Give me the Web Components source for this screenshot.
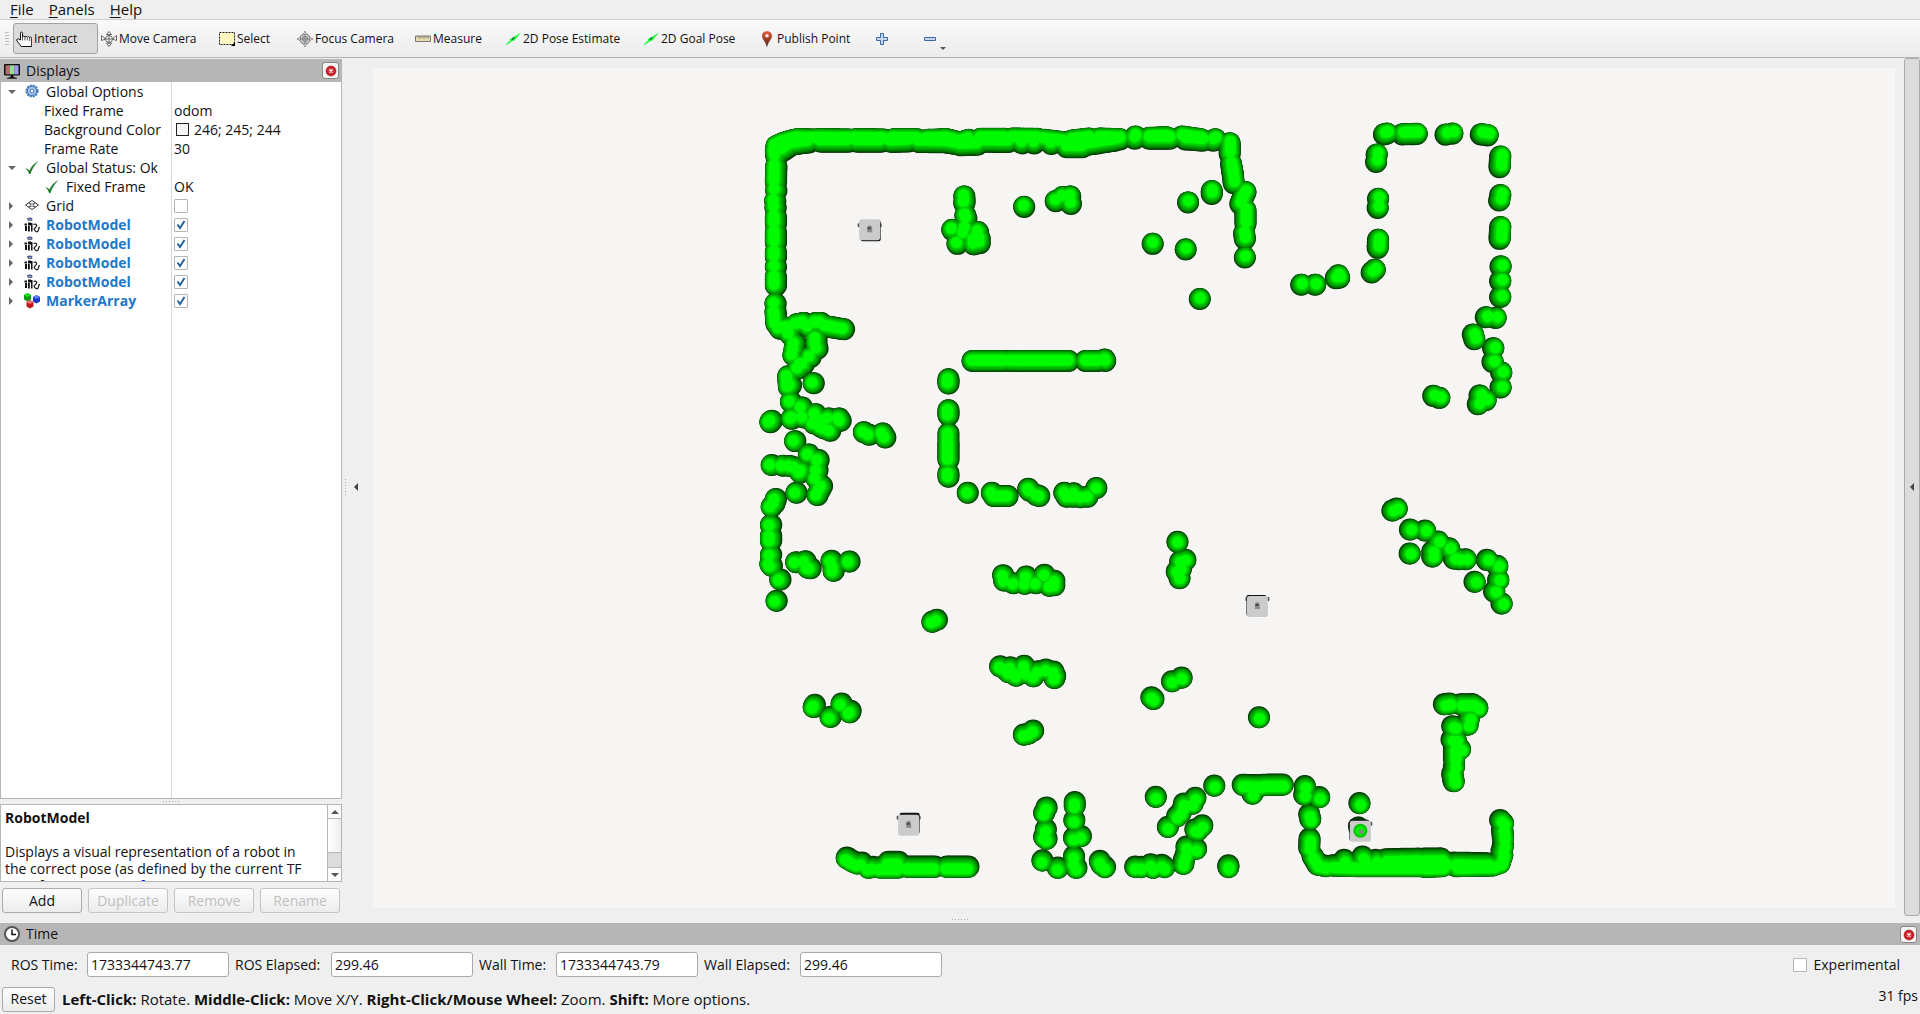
<!DOCTYPE html>
<html lang="en">
<head>
<meta charset="utf-8">
<title>RViz</title>
<style>
html, body { margin: 0; height: 100%; }
body { font: 14px/19px "Open Sans", "Noto Sans", sans-serif; color: #111; background: #efefef; overflow: hidden; }
</style>
</head>
<body>
<rviz-app></rviz-app>
<script>
const define = (name, html, setup) => {
  const tpl = document.createElement('template');
  tpl.innerHTML = html;
  customElements.define(name, class extends HTMLElement {
    connectedCallback() {
      if (this.shadowRoot) return;
      const root = this.attachShadow({ mode: 'open' });
      root.append(tpl.content.cloneNode(true));
      if (setup) setup(this, root);
    }
  });
};

const makeIcon = name => {
  const icon = document.createElement('rv-icon');
  icon.setAttribute('name', name);
  return icon;
};

const ICONS = {
  hand: '<path d="M4.500 9V2.200q0-1.200 1-1.200t1 1.200V6q.2-.9 1.200-.9t1.200 1q.3-.8 1.200-.8t1.200 1q.3-.6 1.200-.6t1.200 1q.3-.5 1-.5t1 1V15.500H5.200Q4 13.500 1 10q-.8-1.200.2-1.900t1.800.3z" fill="#fff" stroke="#111"/><path d="M6.500 6v3.500M8.900 6v3.500M11.300 6.500v3M13.700 7v3" stroke="#333" fill="none" stroke-width=".8"/>',
  move: '<g fill="#fff" stroke="#666"><circle cx="8" cy="8" r="3.500"/><path d="M8 .5L10.500 3.500H5.500zM8 15.500L10.500 12H5.500zM.5 4.500L4.500 8L.5 9.500zM15.500 4.500L11.500 8L15.500 9.500z"/><path d="M8 3v10M3 8h10" /></g>',
  select: '<path d="M.5 1.500h15v12H.5z" fill="#fff7c0" stroke="#222" stroke-dasharray="2 1"/><path d="M16 11v4h-4z" fill="#000"/>',
  focus: '<g fill="none" stroke="#888" stroke-width="1.300"><circle cx="8" cy="8" r="5"/><circle cx="8" cy="8" r="2.500"/><path d="M8 0v16M0 8h16"/></g><path d="M8 .5l1.500 2.500h-3zM8 15.500L6.500 13h3zM.5 8L3 6.500v3zM15.500 8L13 9.500v-3z" fill="#fff" stroke="#888" stroke-width=".7"/>',
  ruler: '<path d="M.5 5h15v5.500H.5z" fill="#e9dcae" stroke="#777"/><path d="M3 5v2M5 5v3M7 5v2M9 5v3M11 5v2M13 5v3" stroke="#777" stroke-width=".8"/>',
  arrow: '<path d="M.5 13.800L5 9.500L4.500 8.500L16 1.500L9.500 9.500L8 9.700L1.500 14z" fill="#1ef53a"/><path d="M7 8.500l2-2" stroke="#063" stroke-width="1.500"/>',
  pin: '<defs><linearGradient id="g" x2="0" y2="1"><stop offset="0" stop-color="#e8583c"/><stop offset="1" stop-color="#4c2b12"/></linearGradient></defs><path d="M8 .2c3 0 5 2 5 4.800C13 8.500 8.800 11 8.200 16H7.800C7.200 11 3 8.500 3 5C3 2.200 5 .2 8 .2z" fill="url(#g)"/><circle cx="8" cy="4.800" r="1.800" fill="#fbe9e4"/>',
  plus: '<path d="M6.500 2.500h3v4h4v3h-4v4h-3v-4h-4v-3h4z" fill="#c5d5ec" stroke="#3a66ab"/>',
  minus: '<path d="M2.500 6.500h11v3h-11z" fill="#c5d5ec" stroke="#3a66ab"/>',
  screen: '<path d="M.5 1.500h15v10.500H.5z" fill="#111" stroke="#111"/><path d="M1.500 2.300h4.500v9H1.500z" fill="#b96c6c"/><path d="M6 2.300h4.200v9H6z" fill="#91e093"/><path d="M10.200 2.300h4.300v9h-4.300z" fill="#9c9ef0"/><path d="M6.500 12h3v2h-3zM3 15q5-1.800 10 0v.8H3z" fill="#111"/>',
  clock: '<circle cx="8" cy="8" r="7" fill="#fff" stroke="#555" stroke-width="2"/><path d="M8 3.500V8.500H12" fill="none" stroke="#111" stroke-width="1.500"/>',
  gear: '<circle cx="8" cy="7" r="5.500" fill="#bcd0ef" stroke="#4878be" stroke-width="2.200" stroke-dasharray="2 .88"/><circle cx="8" cy="7" r="4.600" fill="#a9c4ea" stroke="#4878be"/><circle cx="8" cy="7" r="1.900" fill="#fff" stroke="#4878be"/>',
  check: '<path d="M1.500 8.500Q3.500 8 5.300 10.500Q8.500 4 14.500 1Q8.500 7 6.500 14H5Q4 10 1.500 8.500z" fill="#1f7a28"/>',
  grid: '<path d="M8 2.500L14.500 7L8 11.500L1.500 7zM4.700 4.700l6.600 4.600M11.300 4.700l-6.600 4.600" fill="none" stroke="#333"/><ellipse cx="8" cy="7" rx="2" ry="1.300" fill="#fff" stroke="#333" stroke-width=".7"/>',
  robot: '<path d="M3.500 1.500q2.500-1.500 4.500 0v2h-4z" fill="#eee" stroke="#222" stroke-width=".6"/><path d="M3.500 1.300h4.500v1.200H3.500z" fill="#2438a8"/><path d="M.5 6.500h2.500v2H.5zM1 9h2v5H1zM4 5.500h3v3H4zM4 9h1.800v5.500H4zM7 6h1.500v8.500H7z" fill="#111"/><path d="M9.500 7.500q2.500-1 3 .5t-1.500 3t1 3.500M12 14.500q2 1 2.500-2l1-2.500" fill="none" stroke="#222" stroke-width="1.300"/>',
  marker: '<path d="M0 2L3.500 0L7 2v4.500L3.500 8.500L0 6.500z" fill="#0a9a12"/><path d="M0 2L3.500 0L7 2L3.500 4z" fill="#19e322"/><path d="M9 4l3.500-2L16 4v4.500l-3.500 2L9 8.500z" fill="#1338c8"/><path d="M9 4l3.500-2L16 4l-3.500 2z" fill="#5b7ff2"/><path d="M2.500 9L6 7l3.500 2v4.500L6 15.500l-3.500-2z" fill="#c41616"/><path d="M2.500 9L6 7l3.500 2L6 11z" fill="#f47272"/>',
  close: '<defs><radialGradient id="r"><stop offset="0" stop-color="#e35a5a"/><stop offset="1" stop-color="#c00f1b"/></radialGradient></defs><circle cx="8" cy="8" r="5" fill="url(#r)" stroke="#a01018" stroke-width=".5"/><path d="M6.500 6.500l3 3M9.500 6.500L6.500 9.500" stroke="#fff" stroke-width="1.300"/>'
};

define('rv-icon', `<style>:host{display:block;width:16px;height:16px;flex:none}svg{display:block}</style>
<svg width="16" height="16" viewBox="0 0 16 16" aria-hidden="true"></svg>`,
  (el, root) => { root.querySelector('svg').innerHTML = ICONS[el.getAttribute('name')]; });

define('menu-bar', `<style>
:host{display:flex;height:19px;gap:15px;padding-left:10px;border-bottom:1px solid #cfcfcf;background:#efefef}
button{all:unset;font-size:15px;line-height:17px}
u{text-decoration-thickness:1px;text-underline-offset:2px}
</style><button><u>F</u>ile</button><button><u>P</u>anels</button><button><u>H</u>elp</button>`);

define('tool-button', `<style>
:host{display:block;box-sizing:border-box;width:var(--w)}
button{display:flex;align-items:center;gap:2px;box-sizing:border-box;width:100%;height:31px;padding:1px 2px 0;margin:0;border:1px solid transparent;border-radius:3px;background:none;font:12px/16px "Open Sans",sans-serif;color:#111;white-space:nowrap}
:host([active]) button{background:#dadada;border-color:#a3a3a3}
.drop{display:none;align-self:end;margin-bottom:3px;border:3px solid transparent;border-top-color:#555;border-bottom:0}
:host([drop]) .drop{display:block}
</style><button><slot></slot><i class="drop"></i></button>`,
  (el, root) => {
    const button = root.querySelector('button');
    button.prepend(makeIcon(el.getAttribute('icon')));
    if (el.hasAttribute('label')) button.setAttribute('aria-label', el.getAttribute('label'));
  });

define('tool-bar', `<style>
:host{display:flex;align-items:center;height:37px;border-bottom:1px solid #b4b4b4;background:linear-gradient(#f9f9f9,#ececec)}
.grip{width:4px;height:16px;margin:0 4px 0 5px;background:radial-gradient(circle,#bbb 1px,transparent 1px) 0 0/2px 3px}
</style><div class="grip"></div>
<tool-button icon="hand" active style="--w:85px">Interact</tool-button>
<tool-button icon="move" style="--w:118px">Move Camera</tool-button>
<tool-button icon="select" style="--w:78px">Select</tool-button>
<tool-button icon="focus" style="--w:118px">Focus Camera</tool-button>
<tool-button icon="ruler" style="--w:90px">Measure</tool-button>
<tool-button icon="arrow" style="--w:138px">2D Pose Estimate</tool-button>
<tool-button icon="arrow" style="--w:116px">2D Goal Pose</tool-button>
<tool-button icon="pin" style="--w:115px">Publish Point</tool-button>
<tool-button icon="plus" label="Add tool" style="--w:48px"></tool-button>
<tool-button icon="minus" label="Remove tool" drop style="--w:48px"></tool-button>`);

define('dock-header', `<style>
:host{display:flex;align-items:center;gap:6px;height:22px;padding:0 3px 0 4px;background:#b6b6b6}
h2{flex:1;margin:0;font-size:14px;line-height:20px;font-weight:400}
button{width:17px;height:17px;padding:0;border:1px solid #888;border-radius:3px;background:#f4f4f4;display:grid;place-items:center;overflow:hidden}
</style><h2><slot></slot></h2><button aria-label="Close"><rv-icon name="close"></rv-icon></button>`,
  (el, root) => root.querySelector('h2').before(makeIcon(el.getAttribute('icon'))));

define('check-box', `<style>
:host{display:block}
label{display:flex;align-items:center;gap:6px}
input{appearance:none;box-sizing:border-box;width:14px;height:14px;margin:0;border:1px solid #b5b5b5;border-radius:1px;background:#fff}
span{display:grid}
span>*{grid-area:1/1}
svg{pointer-events:none;display:none}
input:checked+svg{display:block}
</style><label><span><input type="checkbox"><svg width="14" height="14" viewBox="0 0 14 14"><path d="M3.500 6.500L6 10L10.500 3" fill="none" stroke="#1f5f9f" stroke-width="1.900"/></svg></span><slot></slot></label>`,
  (el, root) => {
    const box = root.querySelector('input');
    box.checked = el.hasAttribute('checked');
    if (el.hasAttribute('label')) box.setAttribute('aria-label', el.getAttribute('label'));
  });

define('tree-row', `<style>
:host{display:grid;grid-template-columns:171px 1fr;height:19px;line-height:19px;white-space:nowrap}
.name{display:flex;align-items:center;gap:6px;padding-left:7px;overflow:hidden}
.twist{flex:none;width:10px;display:grid;place-items:center start}
.twist i{width:0;height:0;border:4px solid transparent}
:host([state=open]) i{border-top-color:#666;border-bottom:0}
:host([state=closed]) i{border-left-color:#666;border-right:0;margin-left:1px}
:host([level="1"]) .name{padding-left:27px}
:host([level=plain]) .twist{width:30px}
:host([link]) .name{color:#2277c8;font-weight:700}
.value{display:flex;align-items:center;gap:4px;padding-left:2px}
</style><div class="name"><span class="twist"><i></i></span><slot></slot></div><div class="value"><slot name="value"></slot></div>`,
  (el, root) => {
    if (el.hasAttribute('icon')) root.querySelector('.twist').after(makeIcon(el.getAttribute('icon')));
  });

define('display-tree', `<style>
:host{display:block;flex:1;min-height:0;box-sizing:border-box;border:1px solid #b6b6b6;border-top:0;background:linear-gradient(90deg,transparent 170px,#d8d8d8 170px,#d8d8d8 171px,transparent 171px) #fff}
.swatch{width:11px;height:11px;margin-left:2px;border:1px solid #222;background:#f6f5f4}
.color{display:flex;align-items:center;gap:5px}
</style>
<tree-row state="open" icon="gear">Global Options</tree-row>
<tree-row level="plain">Fixed Frame<span slot="value">odom</span></tree-row>
<tree-row level="plain">Background Color<span slot="value" class="color"><i class="swatch"></i>246; 245; 244</span></tree-row>
<tree-row level="plain">Frame Rate<span slot="value">30</span></tree-row>
<tree-row state="open" icon="check">Global Status: Ok</tree-row>
<tree-row level="1" icon="check">Fixed Frame<span slot="value">OK</span></tree-row>
<tree-row state="closed" icon="grid">Grid<check-box slot="value" label="Grid"></check-box></tree-row>
<tree-row state="closed" icon="robot" link>RobotModel<check-box slot="value" label="RobotModel" checked></check-box></tree-row>
<tree-row state="closed" icon="robot" link>RobotModel<check-box slot="value" label="RobotModel" checked></check-box></tree-row>
<tree-row state="closed" icon="robot" link>RobotModel<check-box slot="value" label="RobotModel" checked></check-box></tree-row>
<tree-row state="closed" icon="robot" link>RobotModel<check-box slot="value" label="RobotModel" checked></check-box></tree-row>
<tree-row state="closed" icon="marker" link>MarkerArray<check-box slot="value" label="MarkerArray" checked></check-box></tree-row>`);

define('push-button', `<style>
:host{display:block}
button{box-sizing:border-box;width:100%;height:25px;padding:0 6px;border:1px solid #aaa;border-radius:3px;background:linear-gradient(#fdfdfd,#ececec);font:14px/20px "Open Sans",sans-serif;color:#111}
button:disabled{color:#bfbfbf;border-color:#c4c4c4}
</style><button><slot></slot></button>`,
  (el, root) => { root.querySelector('button').disabled = el.hasAttribute('disabled'); });

define('help-text', `<style>
:host{display:flex;box-sizing:border-box;height:78px;border:1px solid #b6b6b6;background:#fff}
.text{flex:1;padding:4px 0 0 4px;overflow:hidden;line-height:17px;white-space:nowrap}
h3{margin:0 0 17px;font-size:14px;line-height:17px;font-weight:700}
a{color:#00f}
.bar{display:flex;flex-direction:column;width:13px;border-left:1px solid #b6b6b6;background:#dcdcdc}
.end{display:grid;place-items:center;height:13px;background:#fafafa}
.thumb{height:33px;border:solid #b6b6b6;border-width:1px 0;background:linear-gradient(90deg,#fff,#eee)}
.gap{flex:1;border-bottom:1px solid #b6b6b6}
i{border:4px solid transparent}
.up{border-bottom-color:#555;border-top:0}.down{border-top-color:#555;border-bottom:0}
</style><div class="text"><h3>RobotModel</h3>Displays a visual representation of a robot in<br>the correct pose (as defined by the current TF<br>transforms). <a href="#">More Information</a>.</div>
<div class="bar"><div class="end"><i class="up"></i></div><div class="thumb"></div><div class="gap"></div><div class="end"><i class="down"></i></div></div>`);

define('displays-panel', `<style>
:host{display:flex;flex-direction:column;width:342px;flex:none;padding-top:1px}
dock-header{height:23px}
.split{display:grid;place-items:center;height:5px}
.split i{width:17px;height:1px;background:repeating-linear-gradient(90deg,#aaa 0 1px,transparent 1px 3px)}
.buttons{display:grid;grid-template-columns:repeat(4,1fr);gap:6px;padding:6px 2px 3px}
</style><dock-header icon="screen">Displays</dock-header><display-tree></display-tree>
<div class="split"><i></i></div><help-text></help-text>
<div class="buttons"><push-button>Add</push-button><push-button disabled>Duplicate</push-button><push-button disabled>Remove</push-button><push-button disabled>Rename</push-button></div>`);

/* Marker spheres, grouped by map sector: origin in view pixels, survey units per pixel on each axis.
   "line" chains are filled with spheres between their points, "dots" are single spheres. */
const SECTORS = [
  { x: 740, y: 110, ux: 2.904, uy: 3,
    line: ['106,107 125,98 150,90 168,86 212,87', '125,120 150,102 200,95', '225,86 318,87', '235,93 315,93', '336,86 418,87', '340,93 410,93', '433,90 450,86 515,86', '440,94 490,92', '520,93 550,88 600,86 625,92', '520,94 600,95 625,100', '640,104 690,102', '640,96 665,88', '700,85 770,85', '700,93 780,94', '792,84 865,85', '885,88 940,95', '965,90 1015,84', '950,110 995,110', '1000,104 1040,98', '1045,84 1105,86', '1050,96 1090,90', '1190,84 1250,84', '1190,82 1240,80', '1285,78 1340,86', '1295,86 1345,90',
      '1424,98 1424,130', '1428,160 1432,185 1436,218', '1470,245 1462,262 1455,280', '1470,300 1470,340', '1466,368 1468,385',
      '104,120 106,140', '105,168 104,215', '104,320 104,340', '104,366 104,396', '104,425 104,440', '104,500 104,525', '103,605 106,640 116,652', '116,655 145,652', '165,642 185,638 200,650', '220,638 235,638', '250,648 302,657',
      '676,752 768,752', '785,752 955,752', '1005,752 1040,752'],
    dots: '106,120 820,98 855,98 905,100 1150,78 1148,84 1382,86 1376,90 105,240 102,272 103,292 104,470 103,580 145,672 160,700 158,718 155,735 222,685 222,700 225,715 205,740 185,762 170,775 1060,748 1062,752 1468,441 1372,242 1372,250 1303,276 1200,400 1296,417 1337,566 826,289 918,272 938,260 960,258 962,280 652,258 653,270 652,278 655,315 658,325 617,358 632,400 680,388 692,365 697,385 680,402 697,398 655,355 650,370' },
  { x: 740, y: 360, ux: 2.904, uy: 3,
    line: ['140,48 142,80', '606,57 606,70', '606,150 606,165', '606,246 606,298', '606,340 606,350', '90,528 90,542', '738,408 778,408'],
    dots: '178,12 214,69 148,75 148,125 180,142 155,172 150,176 185,172 220,162 215,190 240,180 235,200 258,175 288,175 292,182 262,212 245,205 92,182 88,186 160,243 200,283 228,300 225,330 180,332 175,337 222,355 238,378 225,405 232,390 92,315 125,317 145,318 160,322 164,398 104,417 92,440 100,430 90,495 90,585 88,612 92,618 117,659 106,723 163,607 190,604 198,624 205,625 266,603 272,620 272,633 318,605 360,216 375,224 415,220 422,232 606,220 606,232 662,398 732,398 838,386 842,392 862,405 870,408 943,398 950,410 970,400 968,410 990,412 1010,410 1036,384 765,646 768,662 795,670 832,650 828,672 860,670 885,645 914,663 914,676 900,678 1272,546 1295,600 1280,605 1270,635 1282,627 1278,655' },
  { x: 780, y: 600, ux: 2.904, uy: 3,
    line: ['194,775 215,788', '315,788 345,788', '290,804 345,804', '372,802 450,802', '485,802 548,802', '1346,556 1400,558', '1405,556 1462,555'],
    dots: '443,66 456,60 640,200 655,208 665,218 685,220 687,228 670,203 710,198 715,220 737,230 750,215 773,210 795,216 798,235 800,228 101,316 98,322 179,312 147,352 205,334 203,338 709,405 722,402 736,393 1080,293 1086,298 1140,245 1168,234 1393,353 225,792 238,790 258,805 270,803 775,624 768,640 773,690 768,712 775,718 763,783 808,805 857,608 857,618 856,662 855,715 875,710 855,770 855,790 862,805 930,785 935,795 945,803 1033,802 1050,803 1078,795 1085,805 1110,797 1118,803 1173,793 1175,780 1180,765 1182,742 1210,748 1208,690 1215,692 1228,678 1128,682 1155,650 1165,640 1175,612 1172,625 1200,612 1208,595 1093,592 1263,558 1304,798 1304,803 1374,582' },
  { x: 1240, y: 100, ux: 3, uy: 3,
    line: ['435,101 443,99', '490,101 533,100', '784,168 782,200', '784,380 782,415', '417,418 416,442'],
    dots: '620,102 640,99 726,101 735,102 746,104 784,284 781,300 785,498 784,542 784,590 741,651 770,653 702,703 706,717 763,744 761,785 787,817 785,862 722,886 740,900 717,912 583,887 601,893 413,162 411,184 417,295 416,322 407,508 398,516 186,553 228,553 290,533 297,525 300,532' },
  { x: 1260, y: 480, ux: 3, uy: 3,
    line: ['555,674 572,672', '605,674 640,674 655,684', '585,808 585,838', '580,882 584,905', '151,1078 150,1105', '160,1130 175,1155 200,1160', '220,1158 290,1160', '300,1160 480,1160', '380,1140 478,1138', '495,1162 550,1160', '495,1138 545,1138 560,1150', '585,1150 685,1152', '590,1160 690,1158', '700,1158 722,1150 730,1125', '730,1050 732,1075', '724,1022 732,1030'],
    dots: '400,92 413,86 453,149 498,152 537,185 570,205 520,215 520,230 452,221 585,236 600,238 620,238 684,240 715,258 718,300 706,335 728,371 647,306 630,715 626,735 580,740 586,742 578,780 603,808 590,780 585,860 137,920 135,945 180,953 150,1005 153,1018 255,1142 258,1150 310,1132 315,1140 350,1142 732,1098 728,1115 301,971' }
];

/* x, y, side offset x, side offset y, marker on top */
const ROBOTS = [[870, 229, 1, 1, 0], [1258, 606, -1, -1, 0], [909, 825, 1, -2, 0], [1361, 831, -1, -1, 1]];
const BANDS = [[0, '#042c04'], [.18, '#005000'], [.34, '#007400'], [.5, '#009200'], [.64, '#00b000'], [.76, '#00d000'], [.86, '#00fa00']];

define('scene-view', `<style>
:host{display:block;flex:1;min-width:0;min-height:0;background:#f6f5f4;overflow:hidden}
svg{display:block;width:100%;height:100%}
</style><svg viewBox="373 68 1523 840" role="img" aria-label="Marker spheres and robots"></svg>`,
  (el, root) => {
    const points = [];
    const parse = text => text.split(' ').map(pair => pair.split(',').map(Number));
    for (const s of SECTORS) {
      const put = (x, y) => points.push([s.x + x / s.ux, s.y + y / s.uy]);
      parse(s.dots).forEach(p => put(...p));
      for (const chain of s.line.map(parse)) {
        chain.slice(1).forEach((b, i) => {
          const a = chain[i];
          const n = Math.max(1, Math.round(Math.hypot(b[0] - a[0], b[1] - a[1]) / 8));
          for (let k = 0; k <= n; k++) put(a[0] + (b[0] - a[0]) * k / n, a[1] + (b[1] - a[1]) * k / n);
        });
      }
    }
    let svg = '';
    for (const [h, color] of BANDS) {
      const r = 11 * Math.sqrt(1 - h * h);
      const lean = (h - .2) * .007;
      svg += `<g fill="${color}">` + points.map(([x, y]) =>
        `<circle cx="${(x + (x - 1134) * lean).toFixed(1)}" cy="${(y + (y - 488) * lean).toFixed(1)}" r="${r.toFixed(1)}"/>`).join('') + '</g>';
    }
    for (const [x, y, dx, dy, lit] of ROBOTS) {
      svg += `<g transform="translate(${x} ${y})"><rect x="-12" y="${dy < 0 ? -9 : -6}" width="24" height="4" rx="1" fill="#555"/>
        ${lit ? '<circle cx="-2" cy="-4" r="10.500" fill="#063806"/>' : ''}
        <rect x="${-10 + dx}" y="${-10 + dy}" width="20" height="21" rx="2" fill="#111"/>
        <rect x="-10.500" y="-10" width="21" height="21" rx="2.500" fill="#cbcbcb"/>
        ${lit ? '<circle r="7" fill="#00c800"/><circle r="4.500" fill="#00f000"/><circle cx="1" cy="1" r="2.200" fill="#888"/>'
              : '<path d="M-2.500 3V-1Q-2-4 0-4T2.500-1V3z" fill="#8a8a8a"/><path d="M-2-2h3v2h-3z" fill="#444"/>'}</g>`;
    }
    root.querySelector('svg').innerHTML = svg;
  });

define('time-field', `<style>
:host{display:flex;align-items:center;gap:6px;width:var(--w)}
label{flex:1;white-space:nowrap}
input{box-sizing:border-box;width:142px;height:25px;padding:0 3px;border:1px solid #aaa;border-radius:3px;background:#fff;font:14px/19px "Open Sans",sans-serif;color:#111}
</style><label for="f"></label><input id="f" type="text">`,
  (el, root) => {
    root.querySelector('label').textContent = el.getAttribute('label');
    root.querySelector('input').value = el.getAttribute('value');
  });

define('time-panel', `<style>
:host{display:block}
.split{display:grid;place-items:center;height:7px}
.split i{width:17px;height:1px;background:repeating-linear-gradient(90deg,#aaa 0 1px,transparent 1px 3px)}
.row{display:flex;align-items:center;gap:6px;height:39px;padding:0 20px 0 11px}
check-box{margin-left:auto}
.status{display:flex;align-items:center;gap:7px;height:30px;padding:0 2px}
.status p{margin:0;white-space:nowrap;font-size:15px}
push-button{width:53px}
.fps{margin-left:auto;align-self:start;line-height:24px}
</style><div class="split"><i></i></div><dock-header icon="clock">Time</dock-header>
<div class="row"><time-field label="ROS Time:" value="1733344743.77" style="--w:218px"></time-field>
<time-field label="ROS Elapsed:" value="299.46" style="--w:238px"></time-field>
<time-field label="Wall Time:" value="1733344743.79" style="--w:219px"></time-field>
<time-field label="Wall Elapsed:" value="299.46" style="--w:238px"></time-field>
<check-box>Experimental</check-box></div>
<div class="status"><push-button>Reset</push-button><p><b>Left-Click:</b> Rotate. <b>Middle-Click:</b> Move X/Y. <b>Right-Click/Mouse Wheel:</b> Zoom. <b>Shift:</b> More options.</p><span class="fps">31 fps</span></div>`);

define('rviz-app', `<style>
:host{display:flex;flex-direction:column;height:100vh}
main{display:flex;flex:1;min-height:0}
.side{display:flex;align-items:center;gap:8px;box-sizing:border-box;width:31px;padding-left:3px;flex:none}
.dots{width:1px;height:17px;background:repeating-linear-gradient(#aaa 0 1px,transparent 1px 3px)}
.tri{border:4px solid transparent;border-right-color:#444;border-left:0}
.view{display:flex;flex:1;min-width:0;padding:10px 0 8px}
.edge{display:flex;align-items:center;justify-content:center;box-sizing:border-box;width:16px;margin:0 0 0 9px;border:1px solid #aaa;border-radius:3px;background:#dcdcdc;padding:0}
</style><menu-bar></menu-bar><tool-bar></tool-bar>
<main><displays-panel></displays-panel>
<div class="side"><i class="dots"></i><i class="tri"></i></div>
<div class="view"><scene-view></scene-view></div>
<button class="edge" aria-label="Show right dock"><i class="tri"></i></button></main>
<time-panel></time-panel>`);
</script>
</body>
</html>
